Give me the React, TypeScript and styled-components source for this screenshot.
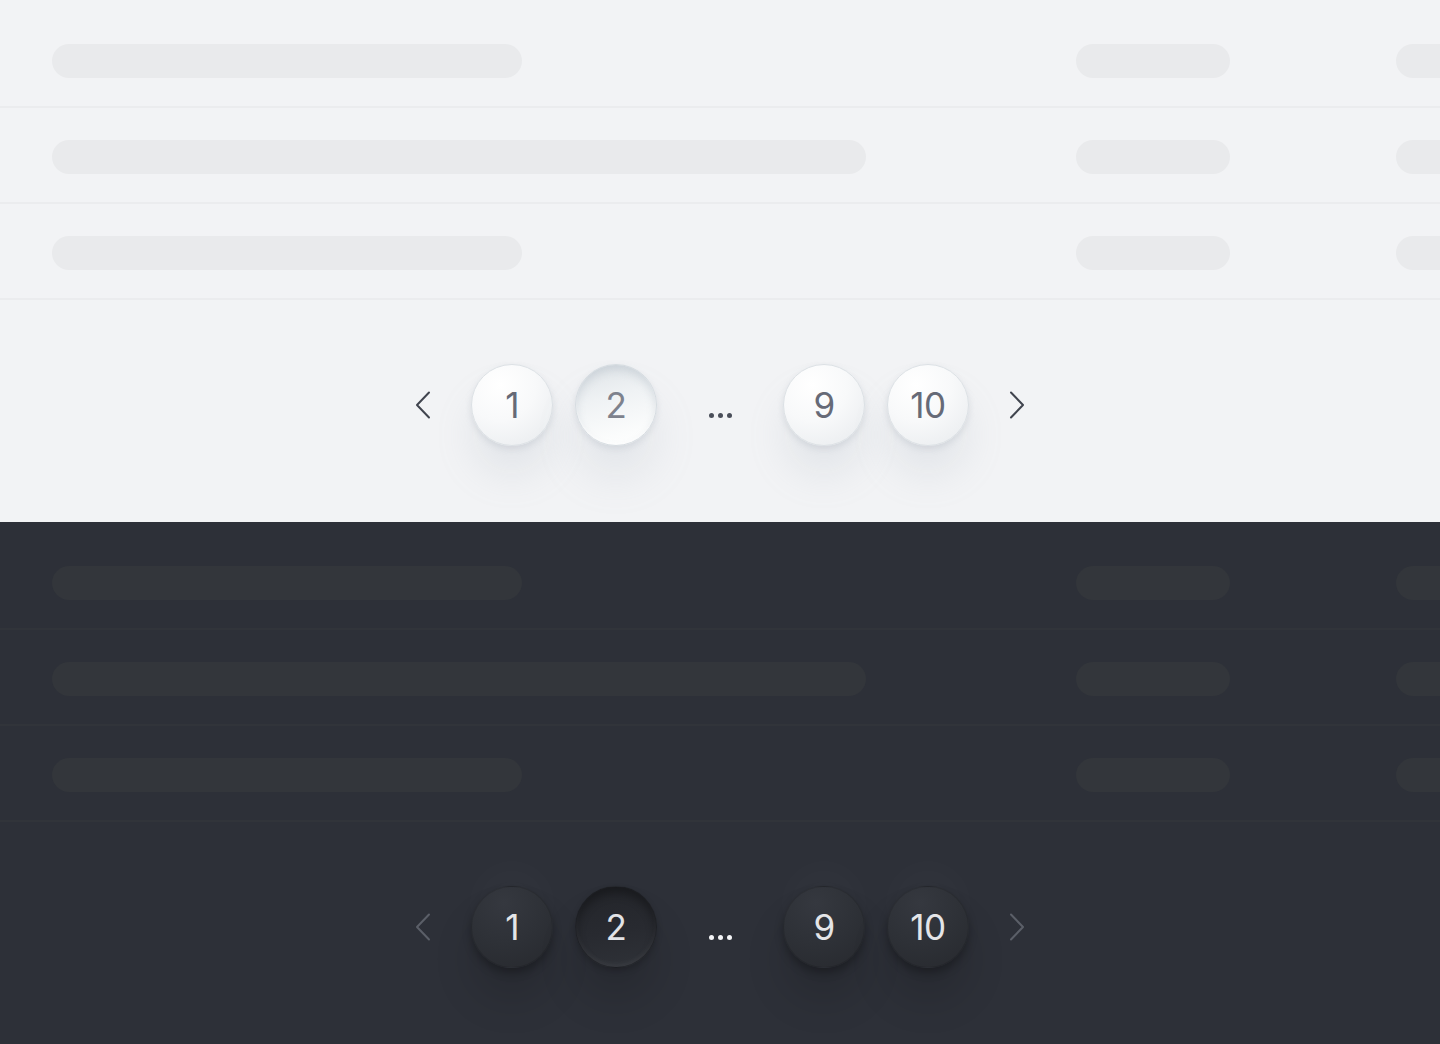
import React from 'react';
import styled, { createGlobalStyle, css } from 'styled-components';

type Mode = 'light' | 'dark';

// Palette for the two halves of the page
const THEMES = {
  light: {
    bg: '#f2f3f5',
    bar: '#e9eaec',
    divider: '#ebecee',
    text: '#666a77',
    activeText: '#7e828d',
    arrow: '#40444e',
    dots: '#4a4e59',
  },
  dark: {
    bg: '#2d3038',
    bar: '#33363b',
    divider: '#31343a',
    text: '#e4e5e8',
    activeText: '#e2e3e6',
    arrow: '#5b5f68',
    dots: '#f4f5f7',
  },
};

const GlobalStyle = createGlobalStyle`
  html, body {
    margin: 0;
    padding: 0;
    background: #2d3038;
  }
  body {
    font-family: Inter, 'Noto Sans', 'Liberation Sans', sans-serif;
  }
`;

const Page = styled.div`
  display: flex;
  flex-direction: column;
  width: 1440px;
`;

const Section = styled.section<{ $mode: Mode }>`
  height: 522px;
  padding-top: 12px;
  box-sizing: border-box;
  overflow: hidden;
  background: ${p => THEMES[p.$mode].bg};
`;

const Row = styled.div<{ $mode: Mode }>`
  display: grid;
  grid-template-columns: 1024px 320px 1fr;
  align-items: start;
  height: 96px;
  box-sizing: border-box;
  padding: 32px 0 28px 52px;
  border-bottom: 2px solid ${p => THEMES[p.$mode].divider};
`;

const Bar = styled.div<{ $mode: Mode; $width: number }>`
  width: ${p => p.$width}px;
  height: 34px;
  border-radius: 17px;
  background: ${p => THEMES[p.$mode].bar};
`;

const Pagination = styled.nav`
  display: flex;
  justify-content: center;
  align-items: center;
  gap: 22px;
  padding-top: 64px;
`;

const Arrow = styled.div<{ $mode: Mode }>`
  width: 52px;
  height: 82px;
  display: flex;
  align-items: center;
  justify-content: center;
  color: ${p => THEMES[p.$mode].arrow};
`;

const lightButton = css`
  background: radial-gradient(circle at 35% 25%, #ffffff 0%, #f8f9fa 45%, #e7eaed 100%);
  border: 1.5px solid #dce1e5;
  color: ${THEMES.light.text};
  box-shadow: 0 3px 6px rgba(140, 150, 165, 0.22), 0 30px 36px rgba(160, 170, 185, 0.17);
`;

const lightActive = css`
  background: linear-gradient(165deg, #dde2e6 0%, #eff2f4 40%, #fbfcfc 80%, #ffffff 100%);
  border: 1.5px solid #d6dce1;
  color: ${THEMES.light.activeText};
  box-shadow: inset 0 5px 9px rgba(160, 170, 182, 0.32), inset 0 -2px 2px rgba(255, 255, 255, 0.9),
    0 3px 6px rgba(140, 150, 165, 0.2), 0 32px 40px rgba(160, 170, 185, 0.17);
`;

const darkButton = css`
  background: radial-gradient(circle at 40% 20%, #35383f 0%, #2e3137 50%, #27292e 100%);
  border: 1.5px solid rgba(0, 0, 0, 0.12);
  color: ${THEMES.dark.text};
  box-shadow: 0 5px 9px rgba(0, 0, 0, 0.28), 0 -24px 36px rgba(255, 255, 255, 0.02),
    0 32px 40px rgba(0, 0, 0, 0.13);
`;

const darkActive = css`
  background: linear-gradient(170deg, #23252a 0%, #282a30 55%, #2f3238 100%);
  border: 1.5px solid rgba(0, 0, 0, 0.2);
  color: ${THEMES.dark.activeText};
  box-shadow: inset 0 6px 10px rgba(0, 0, 0, 0.32), inset 0 -3px 4px rgba(255, 255, 255, 0.06),
    0 3px 6px rgba(0, 0, 0, 0.2), 0 32px 40px rgba(0, 0, 0, 0.13);
`;

const PageButton = styled.button<{ $mode: Mode; $active?: boolean }>`
  width: 82px;
  height: 82px;
  border-radius: 50%;
  box-sizing: border-box;
  padding: 0;
  display: flex;
  align-items: center;
  justify-content: center;
  font-family: Inter, 'Noto Sans', 'Liberation Sans', sans-serif;
  font-size: 35px;
  font-weight: 400;
  letter-spacing: -0.5px;
  cursor: pointer;
  ${p =>
    p.$mode === 'light'
      ? p.$active
        ? lightActive
        : lightButton
      : p.$active
      ? darkActive
      : darkButton}
`;

const Ellipsis = styled.div`
  width: 82px;
  height: 82px;
  display: flex;
  align-items: center;
  justify-content: center;
  gap: 4px;
  padding-top: 20px;
  box-sizing: border-box;
`;

const Dot = styled.span<{ $mode: Mode }>`
  width: 5px;
  height: 5px;
  border-radius: 50%;
  background: ${p => THEMES[p.$mode].dots};
`;

const Chevron = ({ dir }: { dir: 'left' | 'right' }) => (
  <svg width="16" height="28" viewBox="0 0 16 28" fill="none">
    <path
      d={dir === 'left' ? 'M14 1.5 L2 14 L14 26.5' : 'M2 1.5 L14 14 L2 26.5'}
      stroke="currentColor"
      strokeWidth="2"
      strokeLinecap="round"
      strokeLinejoin="round"
    />
  </svg>
);

const ROWS = [470, 814, 470];

const Block = ({ mode }: { mode: Mode }) => (
  <Section $mode={mode}>
    {ROWS.map((w, i) => (
      <Row $mode={mode} key={i}>
        <Bar $mode={mode} $width={w} />
        <Bar $mode={mode} $width={154} />
        <Bar $mode={mode} $width={154} />
      </Row>
    ))}
    <Pagination>
      <Arrow $mode={mode}>
        <Chevron dir="left" />
      </Arrow>
      <PageButton $mode={mode}>1</PageButton>
      <PageButton $mode={mode} $active>
        2
      </PageButton>
      <Ellipsis>
        <Dot $mode={mode} />
        <Dot $mode={mode} />
        <Dot $mode={mode} />
      </Ellipsis>
      <PageButton $mode={mode}>9</PageButton>
      <PageButton $mode={mode}>10</PageButton>
      <Arrow $mode={mode}>
        <Chevron dir="right" />
      </Arrow>
    </Pagination>
  </Section>
);

const App: React.FC = () => (
  <>
    <GlobalStyle />
    <Page>
      <Block mode="light" />
      <Block mode="dark" />
    </Page>
  </>
);

export default App;
